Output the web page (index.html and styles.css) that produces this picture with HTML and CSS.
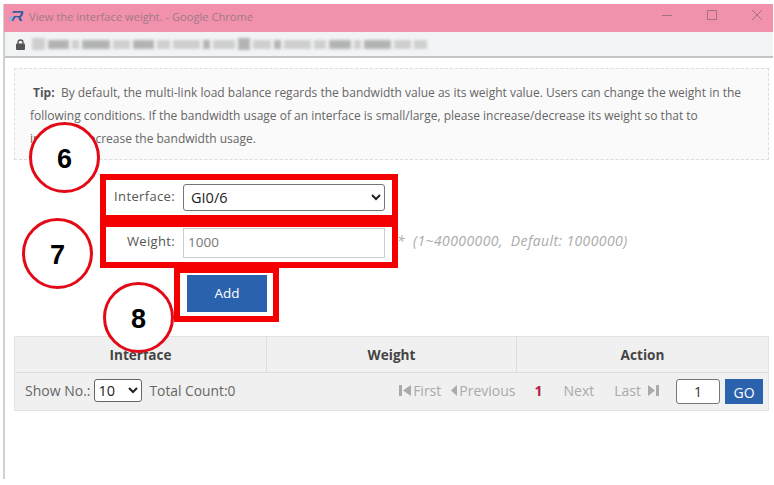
FILE: index.html
```html
<!DOCTYPE html>
<html lang="en">
<head>
<meta charset="utf-8">
<title>View the interface weight.</title>
<link rel="stylesheet" href="styles.css">
</head>
<body>
<div class="window">
  <header class="titlebar">
    <svg class="logo" width="15" height="12" viewBox="0 0 18 14"><path d="M5 1h11.500l1 1.500L16 7l-2 1.500 2 4.500h-3l-2-4.500H8l-3 4.500H3l3-6h7l1.500-4H3.500z" fill="#2f5f9f"/><path d="M1 7.500h4L2.500 13H0z" fill="#8fb0d8"/></svg>
    <span class="title">View the interface weight. - Google Chrome</span>
    <div class="controls">
      <svg width="12" height="12" viewBox="0 0 12 12"><path d="M1 6.500h10" stroke="#a5727f" fill="none"/></svg>
      <svg width="12" height="12" viewBox="0 0 12 12"><rect x="1.500" y="1.500" width="9" height="9" stroke="#a5727f" fill="none"/></svg>
      <svg width="12" height="12" viewBox="0 0 12 12"><path d="M1 1l10 10M11 1L1 11" stroke="#a5727f" fill="none"/></svg>
    </div>
  </header>
  <div class="addressbar">
    <svg width="9" height="11" viewBox="0 0 9 11"><path d="M2 5V3.500a2.500 2.500 0 0 1 5 0V5" stroke="#555" fill="none" stroke-width="1.300"/><rect y="4.500" width="9" height="6.500" rx="1" fill="#555"/></svg>
    <div class="url">
      <i class="b w3 tall"></i><i class="b w5 d"></i><i class="b w2"></i><i class="b w6 d"></i><i class="b w4"></i><i class="b w5 d"></i><i class="b w3"></i><i class="b w6"></i><i class="b w2 d"></i><i class="b w5"></i><i class="b w3 d tall"></i><i class="b w4"></i><i class="b w2 d"></i><i class="b w6"></i><i class="b w3"></i><i class="b w5 d"></i><i class="b w2"></i><i class="b w6 d"></i><i class="b w4"></i><i class="b w3"></i>
    </div>
  </div>
  <main class="content">
    <section class="tip">
      <p><b>Tip:</b>&nbsp; By default, the multi-link load balance regards the bandwidth value as its weight value. Users can change the weight in the following conditions. If the bandwidth usage of an interface is small/large, please increase/decrease its weight so that to increase/decrease the bandwidth usage.</p>
    </section>
    <form class="form">
      <div class="row">
        <label class="lbl">Interface:</label>
        <select class="sel"><option>GI0/6</option></select>
      </div>
      <div class="row row-w">
        <label class="lbl">Weight:</label>
        <input class="inp" type="text" value="1000">
        <span class="hint"><span class="star">*</span>(1~40000000,&nbsp; Default: 1000000)</span>
      </div>
      <div class="row-b"><button class="add" type="button">Add</button></div>
    </form>
    <section class="table">
      <div class="thead"><div>Interface</div><div>Weight</div><div>Action</div></div>
      <div class="tfoot">
        <span class="lift">Show No.:</span>
        <select class="psel lift"><option>10</option></select>
        <span class="count lift">Total Count:0</span>
        <nav class="pager">
          <span class="pg first"><svg width="13" height="11" viewBox="0 0 13 11"><path d="M0 0h3v11H0zM12 0v11L4 5.500z" fill="#aaa"/></svg>First</span>
          <span class="pg prev"><svg width="7" height="11" viewBox="0 0 7 11"><path d="M6 0v11L0 5.500z" fill="#aaa"/></svg>Previous</span>
          <span class="cur">1</span>
          <span class="pg next">Next</span>
          <span class="pg last">Last<svg width="11" height="11" viewBox="0 0 11 11"><path d="M0 0v11l7-5.500zM8 0h3v11H8z" fill="#aaa"/></svg></span>
          <input class="goto" type="text" value="1">
          <button class="go" type="button">GO</button>
        </nav>
      </div>
    </section>
  </main>
</div>
<div class="mark box1"></div>
<div class="mark box2"></div>
<div class="mark box3"></div>
<div class="circle c6">6</div>
<div class="circle c7">7</div>
<div class="circle c8">8</div>
</body>
</html>
```

FILE: styles.css
```css
* { box-sizing: border-box; }
html, body { margin: 0; padding: 0; }
body { width: 774px; height: 485px; background: #fff; font-family: "Open Sans", "Noto Sans", sans-serif; color: #666; overflow: hidden; position: relative; }
.window { margin: 4px 1px 0 3px; height: 475px; border-left: 2px solid #d0d0d0; }
.titlebar { height: 28px; margin-left: -1px; background: #f291ab; display: flex; align-items: center; padding: 0 0 4px 5px; }
.logo { flex: none; }
.title { margin-left: 5px; font-size: 11.150px; color: #a07a88; }
.controls { margin-left: auto; display: flex; gap: 33px; padding: 0 10px 2px 0; align-items: center; }
.addressbar { height: 26px; background: #f2f3f5; border-bottom: 2px solid #c4c4c4; display: flex; align-items: center; padding-left: 11px; }
.url { display: flex; gap: 3px; margin-left: 7px; width: 395px; filter: blur(1.6px); align-items: center; opacity: .85; }
.b { display: block; height: 9px; background: #c8c8c8; flex: 1 1 auto; }
.b.d { background: #a8a8a8; }
.b.tall { height: 12px; }
.w2 { width: 8px; } .w3 { width: 14px; } .w4 { width: 19px; } .w5 { width: 24px; } .w6 { width: 30px; }
.content { padding: 10px 4px 0 9px; }
.tip { height: 92px; border: 1px dashed #ddd; background: #fafafa; padding: 12px 25px 0 15px; font-size: 12px; line-height: 23px; color: #666; }
.tip p { margin: 0; text-indent: 3px; }
.tip b { color: #555; }
.form { padding-top: 24px; height: 176px; position: relative; }
.row { display: flex; align-items: center; height: 27px; }
.row-w { margin-top: 17px; height: 30px; }
.lbl { width: 161px; text-align: right; font-size: 13px; letter-spacing: .35px; color: #555; margin-top: -4px; }
.sel { margin-left: 8px; width: 202px; height: 27px; font: 14.500px "Open Sans", sans-serif; color: #222; background: #fff; border: 1px solid #777; border-radius: 3px; padding-left: 3px; }
.inp { margin-left: 8px; width: 202px; height: 30px; border: 1px solid #ccc; font: 13.500px "Open Sans", sans-serif; color: #777; padding: 0 0 3px 4px; background: #fff; }
.hint { font-style: italic; font-size: 14px; letter-spacing: .4px; color: #aaa; margin: 0 0 5px 12px; }
.star { margin-right: 8px; }
.row-b { margin: 17px 0 0 173px; }
.add { width: 80px; height: 37px; background: #2a62ad; border: 0; color: #fff; font: 500 13.500px "Open Sans", sans-serif; padding: 0 0 1px; }
.table { background: #f0f0f0; height: 75px; border: 1px solid #e2e2e2; }
.thead { display: grid; grid-template-columns: 252px 250px 1fr; height: 36px; border-bottom: 1px solid #ddd; }
.thead div { display: flex; align-items: center; justify-content: center; font-weight: 700; font-size: 13.600px; color: #444; border-right: 1px solid #ddd; }
.thead div:last-child { border-right: 0; }
.tfoot { display: flex; align-items: center; height: 37px; padding: 0 5px 0 10px; font-size: 14px; color: #666; }
.lift { margin-bottom: 3px; }
.psel { margin-left: 3px; width: 48px; height: 23px; background: #fff; border: 1px solid #666; border-radius: 3px; font: 14.500px "Open Sans", sans-serif; color: #222; }
.count { margin-left: 8px; font-size: 13.800px; }
.pager { margin-left: auto; display: flex; align-items: center; color: #aaa; font-size: 14px; }
.pg, .cur { margin-bottom: 2px; }
.pg { display: flex; align-items: center; gap: 1px; }
.prev { margin-left: 10px; }
.cur { margin-left: 19px; color: #b0223f; font-weight: 700; }
.next { margin-left: 21px; }
.last { margin-left: 20px; gap: 7px; }
.goto { margin-left: 17px; width: 44px; height: 25px; border: 1px solid #777; border-radius: 3px; background: #fff; text-align: center; font: 14px "Open Sans", sans-serif; color: #333; padding: 0; }
.go { margin-left: 5px; width: 38px; height: 25px; background: #2a62ad; border: 0; color: #fff; font: 14px "Open Sans", sans-serif; padding: 2px 0 0; }
.mark { position: absolute; border: 6px solid #f40000; }
.box1 { left: 100px; top: 174px; width: 298px; height: 47px; }
.box2 { left: 100px; top: 221px; width: 298px; height: 47px; }
.box3 { left: 174px; top: 267px; width: 105px; height: 55px; }
.circle { position: absolute; width: 71px; height: 71px; border-radius: 50%; border: 3px solid #e30a17; background: #fff; display: flex; align-items: center; justify-content: center; padding-top: 4px; font: 700 27px "Liberation Sans", Arial, sans-serif; color: #000; }
.c6 { left: 29px; top: 122px; }
.c7 { left: 22px; top: 218px; }
.c8 { left: 103px; top: 282px; }
```
